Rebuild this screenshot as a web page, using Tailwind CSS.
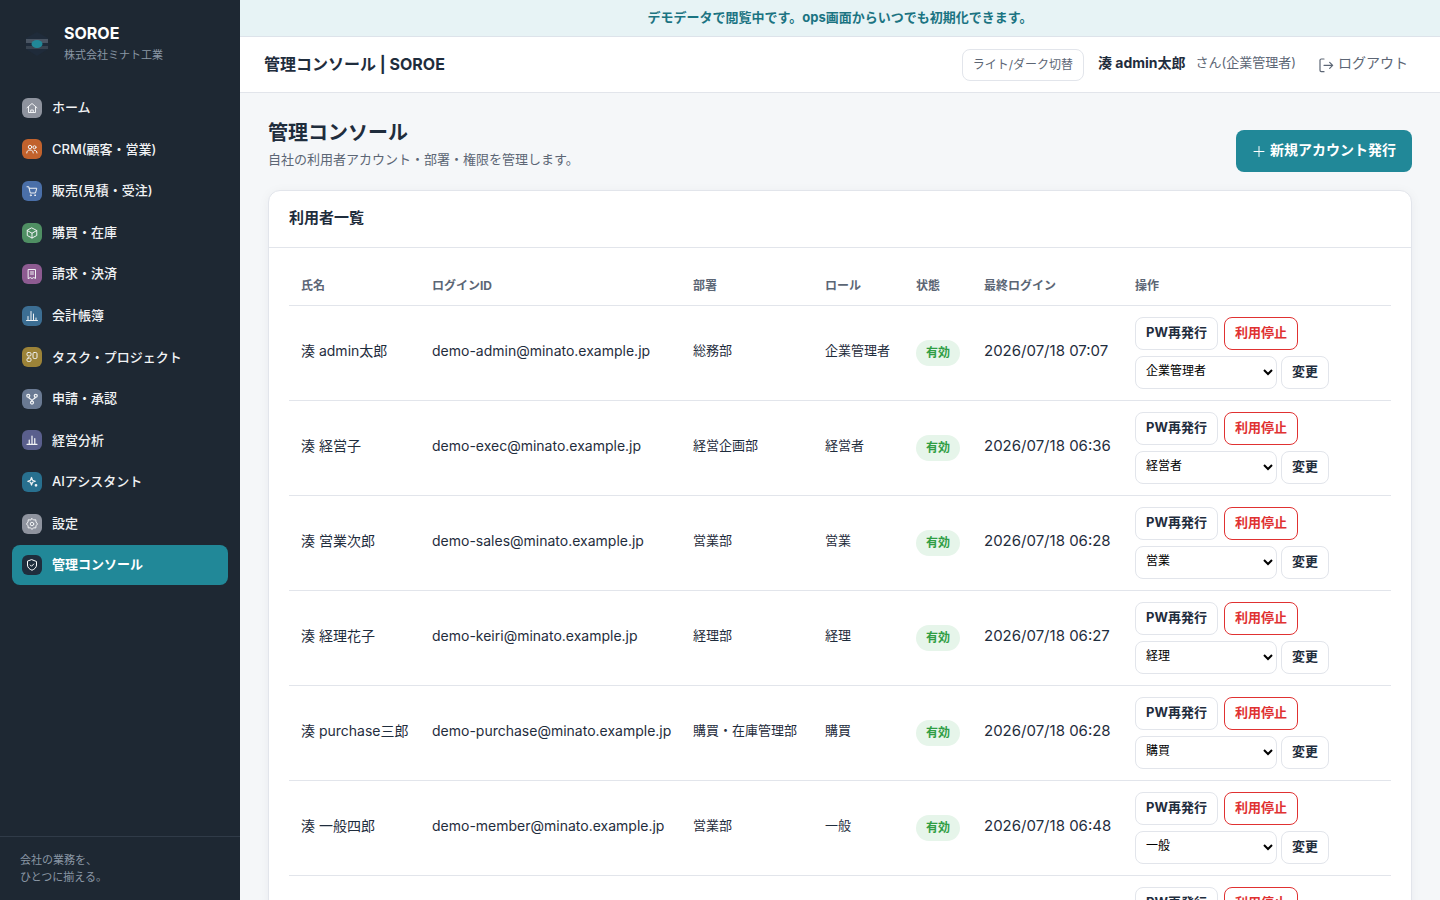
<!DOCTYPE html>
<html lang="ja">
<head>
  <meta charset="UTF-8" />
  <meta name="viewport" content="width=device-width, initial-scale=1" />
  <title>管理コンソール | SOROE</title>
  <script src="https://cdn.jsdelivr.net/npm/@tailwindcss/browser@4"></script>
</head>
<body class="flex h-screen overflow-hidden bg-[#f5f7f9] text-[#1f2d3d] font-['Inter','Noto_Sans_CJK_JP',sans-serif]">

  <!-- Sidebar -->
  <aside class="flex w-60 shrink-0 flex-col bg-[#1e2833]">
    <div class="flex items-center gap-3 px-5 pt-[21px] pb-[23px]">
      <svg class="size-8" viewBox="0 0 32 32" aria-hidden="true">
        <path d="M17 5l11 6v11l-11 7-11-7V11z" fill="#1f2b3a" />
        <path d="M6 12h22v4H6z" fill="#4a5563" />
        <path d="M6 19h22v3H6z" fill="#384350" />
        <ellipse cx="17" cy="17" rx="5.5" ry="4" fill="#218898" />
      </svg>
      <div>
        <p class="text-base leading-6 font-bold text-white">SOROE</p>
        <p class="text-[11px] leading-5 text-[#8a97a5]">株式会社ミナト工業</p>
      </div>
    </div>

    <nav class="grid h-[497px] auto-rows-fr gap-0.5 px-3 text-[13px] font-medium text-[#f1f3f5]">
      <a href="#" class="flex items-center gap-2.5 rounded-lg px-2.5">
        <span class="flex size-5 items-center justify-center rounded-md bg-[#8e939e]">
          <svg class="size-3" viewBox="0 0 24 24" fill="none" stroke="currentColor" stroke-width="2" stroke-linecap="round" stroke-linejoin="round"><path d="M2 11.500 12 3l10 8.500M5 9.500V21h14V9.500M9.500 21v-5h5v5" /></svg>
        </span>
        ホーム
      </a>
      <a href="#" class="flex items-center gap-2.5 rounded-lg px-2.5">
        <span class="flex size-5 items-center justify-center rounded-md bg-[#c1622d]">
          <svg class="size-3" viewBox="0 0 24 24" fill="none" stroke="currentColor" stroke-width="2" stroke-linecap="round" stroke-linejoin="round"><circle cx="8" cy="8" r="3.500" /><circle cx="17" cy="8.500" r="3" /><path d="M1.500 20c0-4 2.500-6 6.500-6s6.500 2 6.500 6M16.500 14.500c3.500 0 5.500 2 5.500 5.500" /></svg>
        </span>
        CRM(顧客・営業)
      </a>
      <a href="#" class="flex items-center gap-2.5 rounded-lg px-2.5">
        <span class="flex size-5 items-center justify-center rounded-md bg-[#4a6fa8]">
          <svg class="size-3" viewBox="0 0 24 24" fill="none" stroke="currentColor" stroke-width="2" stroke-linecap="round" stroke-linejoin="round"><path d="M2 3.500h3.500L8.500 16H19l2.500-9.500H6.500" /><circle cx="9.500" cy="20.500" r="1" /><circle cx="18" cy="20.500" r="1" /></svg>
        </span>
        販売(見積・受注)
      </a>
      <a href="#" class="flex items-center gap-2.5 rounded-lg px-2.5">
        <span class="flex size-5 items-center justify-center rounded-md bg-[#4f8f63]">
          <svg class="size-3" viewBox="0 0 24 24" fill="none" stroke="currentColor" stroke-width="2" stroke-linecap="round" stroke-linejoin="round"><path d="M12 2l9.500 5v10L12 22l-9.500-5V7zM2.500 7l9.500 5.500L21.500 7M12 12.500V22" /></svg>
        </span>
        購買・在庫
      </a>
      <a href="#" class="flex items-center gap-2.5 rounded-lg px-2.5">
        <span class="flex size-5 items-center justify-center rounded-md bg-[#8d5b91]">
          <svg class="size-3" viewBox="0 0 24 24" fill="none" stroke="currentColor" stroke-width="2" stroke-linecap="round" stroke-linejoin="round"><path d="M5 3h14v18l-3.500-2-3.500 2-3.500-2L5 21zM9 8h6M9 12h6" /></svg>
        </span>
        請求・決済
      </a>
      <a href="#" class="flex items-center gap-2.5 rounded-lg px-2.5">
        <span class="flex size-5 items-center justify-center rounded-md bg-[#3c6e93]">
          <svg class="size-3" viewBox="0 0 24 24" fill="none" stroke="currentColor" stroke-width="2" stroke-linecap="round" stroke-linejoin="round"><path d="M1 21h22M4 20v-7M10 20V3M15 20V8M20 20v-4" /></svg>
        </span>
        会計帳簿
      </a>
      <a href="#" class="flex items-center gap-2.5 rounded-lg px-2.5">
        <span class="flex size-5 items-center justify-center rounded-md bg-[#9c8338]">
          <svg class="size-3" viewBox="0 0 24 24" fill="none" stroke="currentColor" stroke-width="2" stroke-linecap="round" stroke-linejoin="round"><rect x="2" y="3" width="8" height="7" rx="2.500" /><rect x="2" y="14" width="8" height="7" rx="2.500" /><rect x="14" y="3" width="8" height="12" rx="2.500" /></svg>
        </span>
        タスク・プロジェクト
      </a>
      <a href="#" class="flex items-center gap-2.5 rounded-lg px-2.5">
        <span class="flex size-5 items-center justify-center rounded-md bg-[#6a7a93]">
          <svg class="size-3" viewBox="0 0 24 24" fill="none" stroke="currentColor" stroke-width="2.500" stroke-linecap="round" stroke-linejoin="round"><circle cx="4.500" cy="5.500" r="3" /><circle cx="19.500" cy="5.500" r="3" /><circle cx="12" cy="19" r="3" /><path d="M5.500 8.500c1 4 6.500 3 6.500 7.500 0-4.500 5.500-3.500 6.500-7.500" /></svg>
        </span>
        申請・承認
      </a>
      <a href="#" class="flex items-center gap-2.5 rounded-lg px-2.5">
        <span class="flex size-5 items-center justify-center rounded-md bg-[#5a5f8d]">
          <svg class="size-3" viewBox="0 0 24 24" fill="none" stroke="currentColor" stroke-width="2.500" stroke-linecap="round" stroke-linejoin="round"><path d="M2 20.500h20M6.500 20v-8M12 20V4M17.500 20V9" /></svg>
        </span>
        経営分析
      </a>
      <a href="#" class="flex items-center gap-2.5 rounded-lg px-2.5">
        <span class="flex size-5 items-center justify-center rounded-md bg-[#28708f]">
          <svg class="size-3" viewBox="0 0 24 24" fill="none" stroke="currentColor" stroke-width="2.500" stroke-linecap="round" stroke-linejoin="round"><path d="M11 3l2 5.500 5.500 2-5.500 2-2 5.500-2-5.500-5.500-2L9 8.500z" /><circle cx="20" cy="18.500" r="1.500" /></svg>
        </span>
        AIアシスタント
      </a>
      <a href="#" class="flex items-center gap-2.5 rounded-lg px-2.5">
        <span class="flex size-5 items-center justify-center rounded-md bg-[#8e939e]">
          <svg class="size-3" viewBox="0 0 24 24" fill="none" stroke="currentColor" stroke-width="2" stroke-linecap="round" stroke-linejoin="round"><circle cx="12" cy="12" r="3.500" /><path d="M12 1l3 3 4.500-.5.500 4.500 3 4-3 3.500-.5 4.500-4.500-.5L12 23l-3-3.500-4.500.5L4 15.500 1 12l3-4 .5-4.500L9 4z" /></svg>
        </span>
        設定
      </a>
      <a href="#" aria-current="page" class="flex items-center gap-2.5 rounded-lg bg-[#218898] px-2.5 font-bold text-white">
        <span class="flex size-5 items-center justify-center rounded-md bg-[#1f2d3d]">
          <svg class="size-3" viewBox="0 0 24 24" fill="none" stroke="currentColor" stroke-width="2" stroke-linecap="round" stroke-linejoin="round"><path d="M12 1.500l9 3.500v7c0 5-4 8.500-9 10.500C7 20.500 3 17 3 12V5zM8.500 12l2.500 2.500 4.500-4.500" /></svg>
        </span>
        管理コンソール
      </a>
    </nav>

    <p class="mt-auto border-t border-[#303b48] px-5 pt-[15px] pb-3.5 text-[11px] leading-[17px] text-[#8a97a5]">会社の業務を、<br />ひとつに揃える。</p>
  </aside>

  <div class="flex min-w-0 flex-1 flex-col">
    <p class="border-b border-[#dde3ea] bg-[#e7f3f5] pt-[7px] pb-[9px] text-center text-[13px] leading-5 font-bold text-[#1b7482]">デモデータで閲覧中です。ops画面からいつでも初期化できます。</p>

    <header class="flex h-14 shrink-0 items-center border-b border-[#e2e5eb] bg-white px-6">
      <p class="pb-0.5 text-base font-bold">管理コンソール | SOROE</p>
      <div class="ml-auto flex items-center text-[13px] text-[#5c6675]">
        <button type="button" class="h-8 rounded-lg border border-[#e2e5eb] px-2.5 text-xs">ライト/ダーク切替</button>
        <span class="ml-3.5 pb-[3px] text-sm font-bold text-[#1f2d3d]">湊 admin太郎</span>
        <span class="ml-2.5 pb-[3px]">さん(企業管理者)</span>
        <a href="#" class="ml-[22px] flex items-center gap-1 pr-2 text-sm">
          <svg class="size-4" viewBox="0 0 24 24" fill="none" stroke="currentColor" stroke-width="1.800" stroke-linecap="round" stroke-linejoin="round"><path d="M9 3H5a2 2 0 0 0-2 2v15a2 2 0 0 0 2 2h4M9 12.500h13M17.500 8l4.500 4.500-4.500 4.500" /></svg>
          <span class="pb-[3px]">ログアウト</span>
        </a>
      </div>
    </header>

    <main class="flex-1 overflow-y-auto px-7 pt-6 pb-7 [scrollbar-width:none]">
      <div class="mb-[18px] flex items-end justify-between">
        <div>
          <h1 class="text-xl leading-8 font-bold">管理コンソール</h1>
          <p class="pb-0.5 text-[13px] leading-[21px] text-[#5c6675]">自社の利用者アカウント・部署・権限を管理します。</p>
        </div>
        <button type="button" class="flex h-[42px] items-center gap-1 rounded-lg bg-[#218898] px-4 text-sm font-bold text-white">
          <svg class="size-3.5" viewBox="0 0 14 14" fill="none" stroke="currentColor" stroke-linecap="round" aria-hidden="true"><path d="M7 2.500v10M2 7.500h10" /></svg>
          <span class="pb-0.5">新規アカウント発行</span>
        </button>
      </div>

      <section class="rounded-xl border border-[#e2e5eb] bg-white shadow-[0_2px_12px_rgba(31,45,61,0.05)]">
        <h2 class="border-b border-[#e2e5eb] px-5 pt-[15px] pb-[17px] text-[15px] leading-6 font-bold">利用者一覧</h2>
        <div class="p-5">
          <table class="w-full table-fixed text-left whitespace-nowrap">
            <thead class="text-xs text-[#5c6675]">
              <tr class="h-[37px] border-b border-[#e2e5eb]">
                <th class="w-[131px] px-3">氏名</th>
                <th class="w-[261px] px-3">ログインID</th>
                <th class="w-[132px] px-3">部署</th>
                <th class="w-[91px] px-3">ロール</th>
                <th class="w-[68px] px-3">状態</th>
                <th class="w-[151px] px-3">最終ログイン</th>
                <th class="px-3">操作</th>
              </tr>
            </thead>
            <tbody id="userRows"></tbody>
          </table>
        </div>
      </section>
    </main>
  </div>

  <script>
    const roles = ["企業管理者", "経営者", "営業", "経理", "購買", "一般"];
    const users = [
      ["湊 admin太郎", "demo-admin@minato.example.jp", "総務部", "企業管理者", "2026/07/18 07:07"],
      ["湊 経営子", "demo-exec@minato.example.jp", "経営企画部", "経営者", "2026/07/18 06:36"],
      ["湊 営業次郎", "demo-sales@minato.example.jp", "営業部", "営業", "2026/07/18 06:28"],
      ["湊 経理花子", "demo-keiri@minato.example.jp", "経理部", "経理", "2026/07/18 06:27"],
      ["湊 purchase三郎", "demo-purchase@minato.example.jp", "購買・在庫管理部", "購買", "2026/07/18 06:28"],
      ["湊 一般四郎", "demo-member@minato.example.jp", "営業部", "一般", "2026/07/18 06:48"],
      ["湊 一般五郎", "demo-member2@minato.example.jp", "総務部", "一般", "2026/07/18 06:20"],
    ];

    document.getElementById("userRows").innerHTML = users.map(([name, login, dept, role, last]) => `
      <tr class="border-b border-[#e2e5eb]">
        <td class="px-3 pb-[3px] text-sm">${name}</td>
        <td class="px-3 pb-[3px] text-sm">${login}</td>
        <td class="px-3 pb-[3px] text-[13px]">${dept}</td>
        <td class="px-3 pb-[3px] text-[13px]">${role}</td>
        <td class="px-3"><span class="inline-block rounded-full bg-[#e6f5ea] px-2.5 py-[3px] text-xs leading-5 font-bold text-[#2f9e44]">有効</span></td>
        <td class="px-3 pb-[3px] text-[15px]">${last}</td>
        <td class="px-3 py-[11px]">
          <div class="flex gap-1.5 text-[13px]">
            <button type="button" class="h-[33px] rounded-lg border border-[#e2e5eb] px-2.5 font-bold">PW再発行</button>
            <button type="button" class="h-[33px] rounded-lg border border-[#e03131] px-2.5 font-bold text-[#e03131]">利用停止</button>
          </div>
          <div class="mt-1.5 flex gap-1">
            <select aria-label="${name}のロール" class="h-[33px] w-[142px] rounded-lg border border-[#e2e5eb] bg-white px-1.5 pb-[3px] text-xs text-black">
              ${roles.map(r => `<option${r === role ? " selected" : ""}>${r}</option>`).join("")}
            </select>
            <button type="button" class="h-[33px] rounded-lg border border-[#e2e5eb] px-2.5 text-[13px] font-bold">変更</button>
          </div>
        </td>
      </tr>`).join("");
  </script>
</body>
</html>
